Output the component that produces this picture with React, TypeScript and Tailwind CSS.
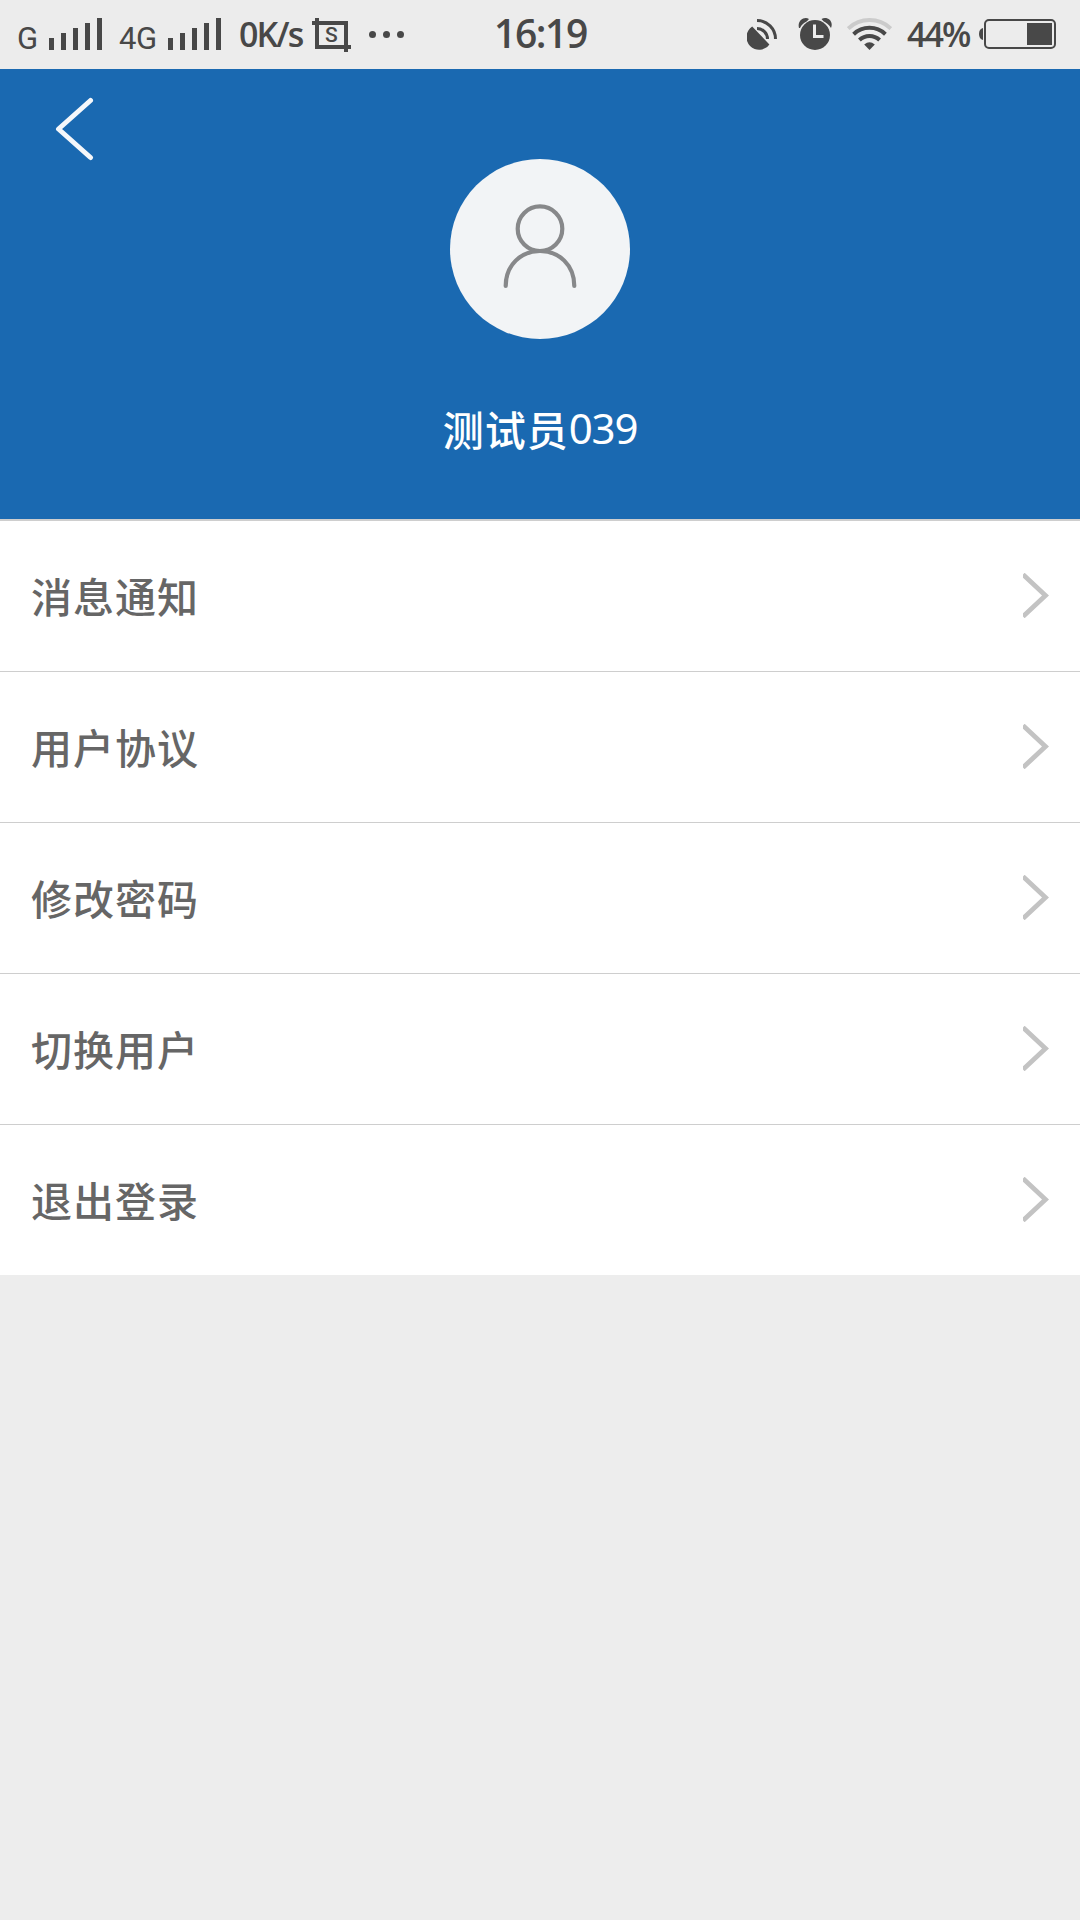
import clsx from "clsx";

const menuItems = ["消息通知", "用户协议", "修改密码", "切换用户", "退出登录"];

function SignalBars({ className }: { className?: string }) {
  return (
    <svg
      className={clsx("h-8 w-[53px] shrink-0", className)}
      viewBox="0 0 53 32"
      fill="#484848"
      shapeRendering="crispEdges"
    >
      <rect x="0" y="20" width="5" height="12" />
      <rect x="12" y="15" width="5" height="17" />
      <rect x="24" y="10" width="5" height="22" />
      <rect x="36" y="5" width="5" height="27" />
      <rect x="48" y="0" width="5" height="32" />
    </svg>
  );
}

function ScreenshotIcon() {
  return (
    <div className="relative ml-[9px] mt-[18px] h-[34px] w-[39px] shrink-0">
      <svg
        className="size-full"
        viewBox="0 0 39 34"
        fill="none"
        stroke="#484848"
        strokeWidth="4"
        shapeRendering="crispEdges"
      >
        <path d="M0 5H34V34M5 0V29H39" />
      </svg>
      <span className="absolute left-[13px] top-[5px] font-[Roboto,sans-serif] text-[21px] leading-6 font-medium">
        S
      </span>
    </div>
  );
}

function SatelliteIcon() {
  return (
    <svg className="ml-[154px] mt-[18px] h-8 w-[31px] shrink-0" viewBox="0 0 31 32" fill="none">
      <path d="M5.2 8.6A12.6 12.6 0 1 0 22.4 26.4Z" fill="#484848" />
      <path d="M10 2.5A18.5 18.5 0 0 1 28.5 21M10 10.5A10.5 10.5 0 0 1 20.5 21" stroke="#484848" strokeWidth="3" />
    </svg>
  );
}

function AlarmIcon() {
  return (
    <svg className="ml-5 mt-[18px] h-8 w-[35px] shrink-0" viewBox="0 0 35 32" fill="none">
      <path d="M1 10C-1 3 6-2 11 1L9 3.3C6 4.6 3.4 7 2 10ZM33 10C36 3 29-2 23.5 1L25.5 3.3C28.5 4.6 31 7 33 10Z" fill="#484848" />
      <circle cx="17" cy="17" r="15" fill="#484848" />
      <path d="M16.5 6.5V18.5H25.5" stroke="#ececec" strokeWidth="3" />
    </svg>
  );
}

function WifiIcon() {
  return (
    <svg className="ml-[14px] mt-[18px] h-8 w-[45px] shrink-0" viewBox="0 0 45 32" fill="none">
      <path d="M1.2 10.5A31 31 0 0 1 43.8 10.5" stroke="#cbcbcb" strokeWidth="3.8" />
      <path d="M6.6 16.2A23 23 0 0 1 38.4 16.2" stroke="#484848" strokeWidth="4" />
      <path d="M12.4 22A14.6 14.6 0 0 1 32.6 22" stroke="#484848" strokeWidth="4" />
      <path d="M17.2 26.6Q22.5 22 27.8 26.6L22.5 32Z" fill="#484848" />
    </svg>
  );
}

function BatteryIcon() {
  return (
    <svg className="ml-2 mt-[19px] h-[30px] w-[77px] shrink-0" viewBox="0 0 77 30" fill="none">
      <path d="M4 9V21Q0 20 0 15Q0 10 4 9Z" fill="#484848" />
      <rect x="6" y="1" width="70" height="28" rx="4" stroke="#484848" strokeWidth="2" />
      <rect x="48" y="4" width="25" height="22" fill="#484848" />
    </svg>
  );
}

function StatusBar() {
  return (
    <div className="flex h-[69px] items-start bg-[#ececec] pl-[17px] whitespace-nowrap text-[#484848]">
      <span className="mt-[19px] w-8 font-[Roboto,sans-serif] text-[31px] leading-10">G</span>
      <SignalBars className="mt-[18px]" />
      <span className="ml-[17px] mt-[19px] w-[49px] font-[Roboto,sans-serif] text-[31px] leading-10 tracking-[-0.5px]">
        4G
      </span>
      <SignalBars className="mt-[18px]" />
      <span className="ml-[18px] mt-[14px] w-[64px] font-['Open_Sans',sans-serif] text-[34px] leading-10 font-semibold tracking-[-1.9px]">
        0K/s
      </span>
      <ScreenshotIcon />
      <svg className="ml-[18px] mt-[31px] h-[7px] w-[35px] shrink-0" viewBox="0 0 35 7" fill="#484848">
        <circle cx="3.5" cy="3.5" r="3.5" />
        <circle cx="17.5" cy="3.5" r="3.5" />
        <circle cx="31.5" cy="3.5" r="3.5" />
      </svg>
      <span className="ml-[90px] mt-[13px] w-[99px] font-['Open_Sans',sans-serif] text-[39px] leading-10 font-semibold tracking-[-1.4px]">
        16:19
      </span>
      <SatelliteIcon />
      <AlarmIcon />
      <WifiIcon />
      <span className="ml-[15px] mt-[14px] w-[64px] font-['Open_Sans',sans-serif] text-[34px] leading-10 font-semibold tracking-[-1.9px]">
        44%
      </span>
      <BatteryIcon />
    </div>
  );
}

function ProfileHeader() {
  return (
    <header className="flex h-[452px] flex-col items-center border-b-2 border-[#cecece] bg-[#1a69b1] pt-[27px]">
      <button className="ml-[54px] self-start">
        <svg className="h-[66px] w-10" viewBox="0 0 40 66" fill="none">
          <path
            d="M36.5 4.5L4.5 33L36.5 61.5"
            stroke="#f5f7fa"
            strokeWidth="5"
            strokeLinecap="round"
            strokeLinejoin="round"
          />
        </svg>
      </button>
      <div className="-mt-[3px] size-[180px] rounded-full bg-[#f2f4f6]">
        <svg viewBox="0 0 180 180" fill="none" stroke="#87888a" strokeWidth="4.2" strokeLinecap="round">
          <circle cx="90" cy="69.7" r="22.3" />
          <path d="M55.7 127C55.7 106 71 92 90 92S124.3 106 124.3 127" />
        </svg>
      </div>
      <h1 className="mt-[59px] flex text-[42px] leading-[60px] text-white">
        <span className="font-['Noto_Sans_CJK_SC',sans-serif] text-[41px] font-medium tracking-[1px]">测试员</span>
        <span className="font-['Noto_Sans',sans-serif] tracking-[-1.2px]">039</span>
      </h1>
    </header>
  );
}

export default function App() {
  return (
    <div className="min-h-[1920px] w-[1080px] bg-[#ededed]">
      <StatusBar />
      <ProfileHeader />
      <ul className="bg-white">
        {menuItems.map((item) => (
          <li
            key={item}
            className="flex h-[151px] items-center justify-between border-b border-[#cecece] pr-[31px] pb-0.5 pl-[31px] last:h-[150px] last:border-b-0"
          >
            <span className="font-['Noto_Sans_CJK_SC',sans-serif] text-[41px] leading-[60px] font-medium tracking-[1px] text-[#666]">
              {item}
            </span>
            <svg className="h-[45px] w-[26px]" viewBox="0 0 26 45" fill="none">
              <path d="M0 1.5L22.5 22.5L0 43.5" stroke="#c3c3c3" strokeWidth="4.8" />
            </svg>
          </li>
        ))}
      </ul>
    </div>
  );
}
